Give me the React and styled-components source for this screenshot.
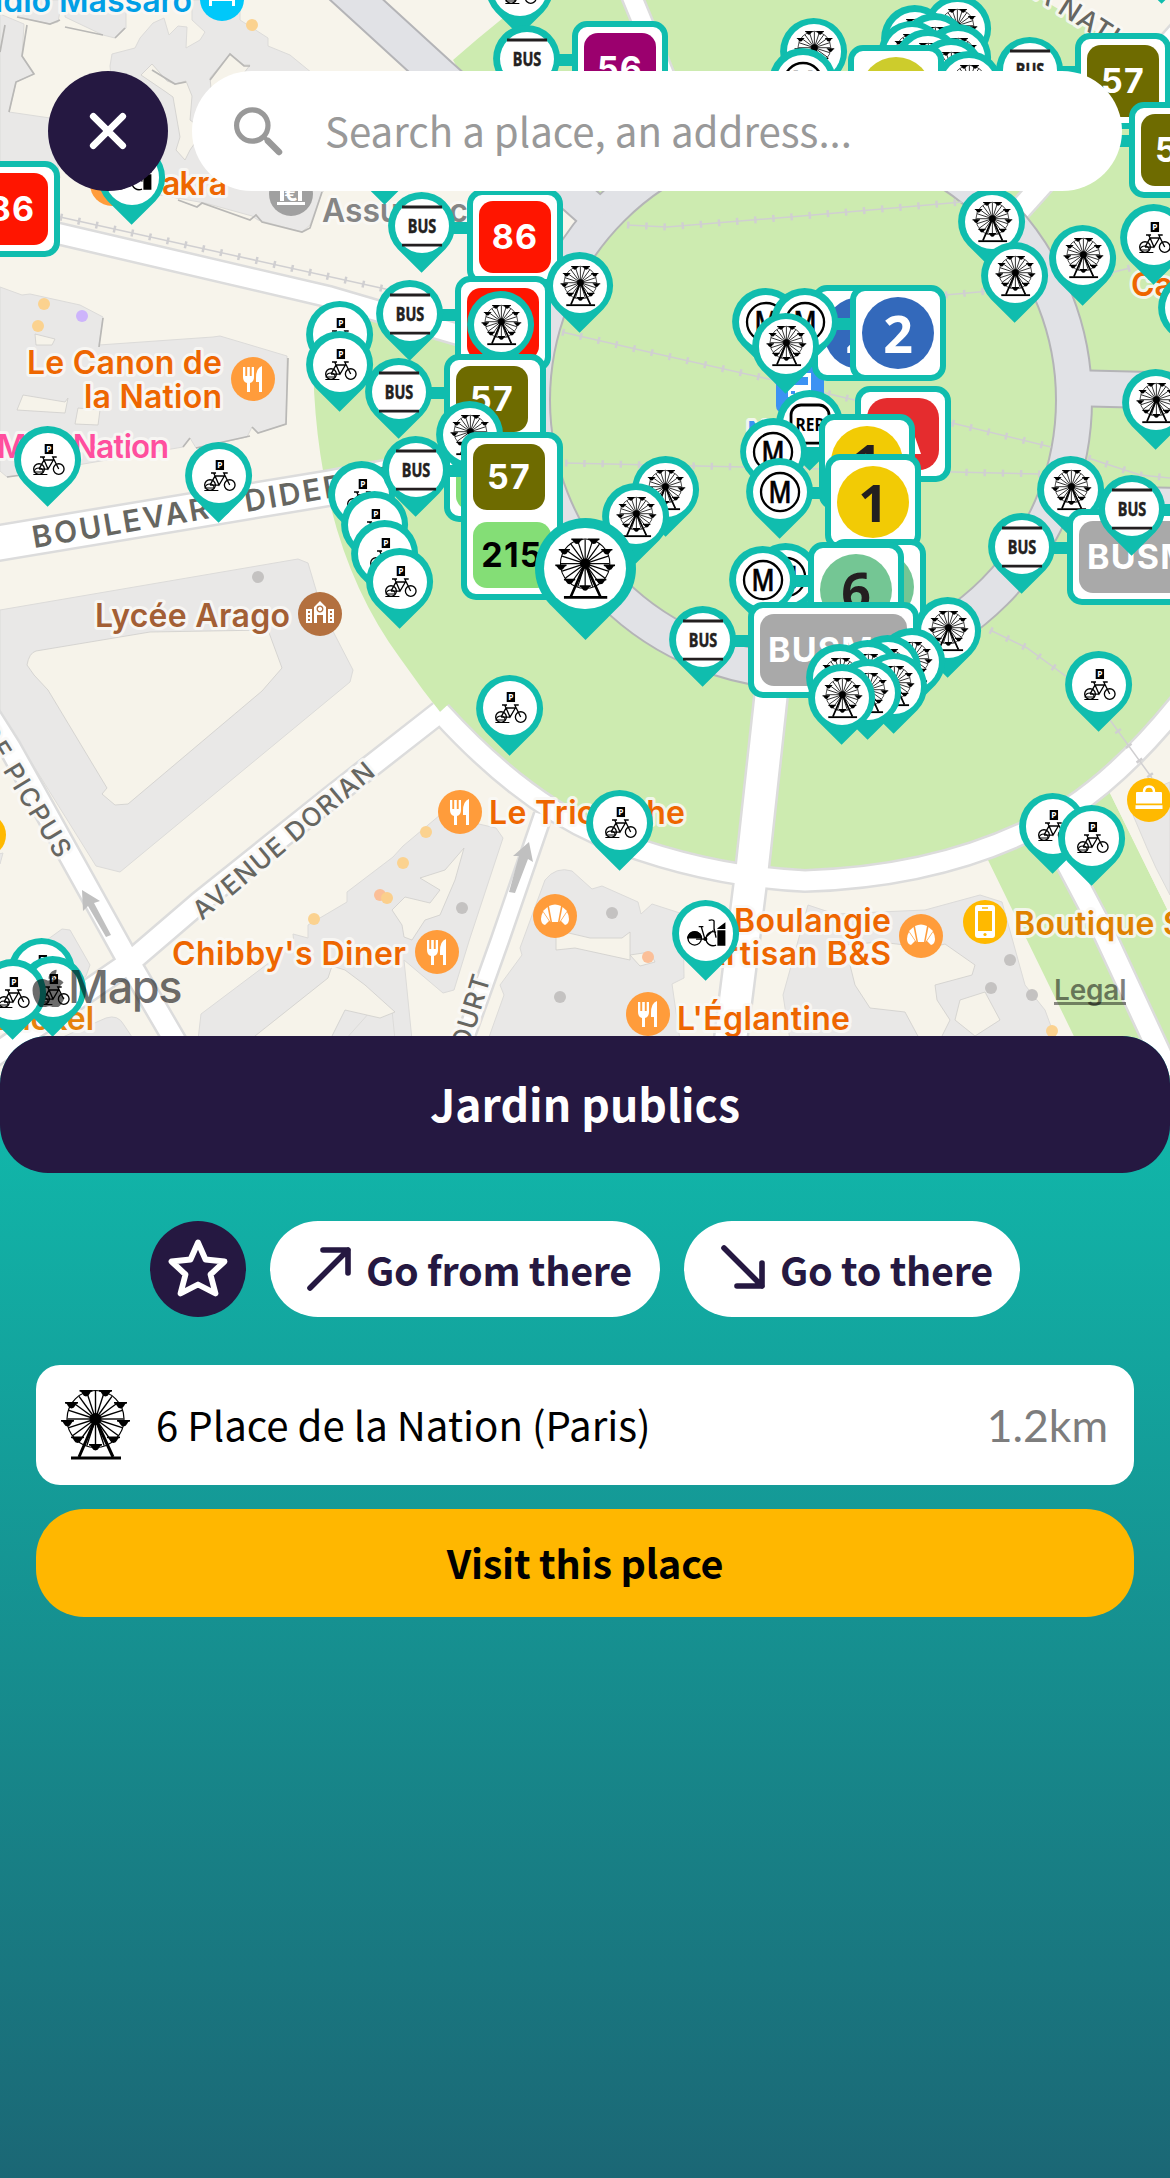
import React from "react";
import styled, { createGlobalStyle, css } from "styled-components";

const TEAL = "#10bdae";
const NIGHT = "#251841";
const ORANGE = "#ee6600";
const UI_FONT = `"Noto Sans CJK SC", "Noto Sans", sans-serif`;
const MAP_FONT = `Inter, "Liberation Sans", sans-serif`;

const GlobalStyle = createGlobalStyle`
  * { box-sizing: border-box; }
  html, body { margin: 0; padding: 0; }
  body { width: 1170px; height: 2178px; overflow: hidden; background: #f7f4eb; font-family: ${UI_FONT}; }
  button, input { font-family: inherit; border: 0; padding: 0; margin: 0; }
`;

/* ---------- layout ---------- */

const Screen = styled.div`
  width: 1170px;
  height: 2178px;
  display: flex;
  flex-direction: column;
  overflow: hidden;
`;

const MapArea = styled.section`
  position: relative;
  flex: 0 0 1100px;
  margin-bottom: -64px;
  overflow: hidden;
  padding: 71px 48px 0;
  background: #f7f4eb;
`;

const MapDrawing = styled.svg`
  position: absolute;
  inset: 0;
  width: 1170px;
  height: 1100px;
  display: block;
`;

const SearchRow = styled.div`
  position: relative;
  display: flex;
  gap: 24px;
`;

const CloseButton = styled.button`
  width: 120px;
  height: 120px;
  border-radius: 50%;
  background: ${NIGHT};
  display: flex;
  align-items: center;
  justify-content: center;
`;

const SearchBar = styled.div`
  width: 930px;
  height: 120px;
  border-radius: 60px;
  background: #fff;
  display: flex;
  align-items: center;
  padding-left: 41px;
  gap: 42px;
`;

const SearchPlaceholder = styled.span`
  color: #999;
  font-size: 40.2px;
  font-weight: 400;
  line-height: 60px;
  white-space: nowrap;
  padding-bottom: 2px;
`;

/* ---------- pins ---------- */

const PinRoot = styled.div`
  position: absolute;
  left: ${(p) => p.$x - p.$r}px;
  top: ${(p) => p.$y - p.$r}px;
  width: ${(p) => p.$r * 2}px;
  height: ${(p) => p.$r * 2}px;
  display: flex;
  align-items: center;
  justify-content: center;
  &::before {
    content: "";
    position: absolute;
    inset: 0;
    background: ${TEAL};
    border-radius: 50% 50% 0 50%;
    transform: rotate(45deg);
  }
`;

const PinFace = styled.div`
  position: relative;
  width: 80.5%;
  height: 80.5%;
  border-radius: 50%;
  background: #fff;
  svg { display: block; width: 100%; height: 100%; }
`;

const LineBox = styled.div`
  position: absolute;
  left: ${(p) => p.$x}px;
  top: ${(p) => p.$y}px;
  border: 6px solid ${TEAL};
  border-radius: 15px;
  background: #fff;
  padding: 6px;
  display: flex;
  flex-direction: column;
  gap: 12px;
  width: ${(p) => p.$w || 96}px;
  ${(p) => p.$link && css`
    &::before {
      content: "";
      position: absolute;
      right: 100%;
      top: ${p.$linkTop}px;
      width: ${p.$link}px;
      height: 12px;
      background: ${TEAL};
    }
  `}
`;

const LineTag = styled.span`
  display: flex;
  align-items: center;
  justify-content: ${(p) => (p.$start ? "flex-start" : "center")};
  padding-left: ${(p) => (p.$start ? 8 : 0)}px;
  width: ${(p) => p.$w || 72}px;
  height: ${(p) => p.$h || 72}px;
  border-radius: 14px;
  background: ${(p) => p.$bg};
  color: ${(p) => p.$fg || "#fff"};
  font-family: ${MAP_FONT};
  font-weight: 650;
  font-size: 34px;
  letter-spacing: 1.2px;
  line-height: 1;
`;

const LineDisc = styled(LineTag)`
  border-radius: ${(p) => (p.$square ? "20px" : "50%")};
  font-family: "Noto Sans", "Open Sans", sans-serif;
  font-weight: 700;
  font-size: 52px;
  letter-spacing: 0;
`;

/* ---------- map marks ---------- */

const MapsMark = styled.div`
  position: absolute;
  left: 32px;
  top: 957px;
  display: flex;
  align-items: center;
  gap: 3px;
  color: rgba(0, 0, 0, 0.58);
  font: 500 45px/60px ${MAP_FONT};
  letter-spacing: -1.4px;
`;

const LegalLink = styled.span`
  position: absolute;
  left: 1054px;
  top: 972px;
  font: 600 28px/36px ${MAP_FONT};
  letter-spacing: -0.2px;
  color: rgba(0, 0, 0, 0.5);
  border-bottom: 3px solid rgba(0, 0, 0, 0.45);
  height: 33px;
`;

/* ---------- sheet ---------- */

const Sheet = styled.main`
  position: relative;
  flex: 1;
  border-radius: 48px 48px 0 0;
  background: linear-gradient(180deg, #10bdae 0%, #1b6775 100%);
  display: flex;
  flex-direction: column;
`;

const SheetTitle = styled.h1`
  margin: 0;
  height: 137px;
  border-radius: 48px;
  background: ${NIGHT};
  color: #fff;
  display: flex;
  align-items: center;
  justify-content: center;
  padding-bottom: 4px;
  font-size: 44.5px;
  font-weight: 700;
  line-height: 64px;
`;

const SheetBody = styled.div`
  display: flex;
  flex-direction: column;
  padding: 48px 36px 0;
`;

const Actions = styled.div`
  display: flex;
  justify-content: center;
  gap: 24px;
  margin-bottom: 48px;
`;

const StarButton = styled.button`
  width: 96px;
  height: 96px;
  border-radius: 50%;
  background: ${NIGHT};
  display: flex;
  align-items: center;
  justify-content: center;
`;

const ActionButton = styled.button`
  width: ${(p) => p.$w}px;
  height: 96px;
  border-radius: 48px;
  background: #fff;
  color: ${NIGHT};
  display: flex;
  align-items: center;
  padding-left: 34px;
  gap: 12px;
  font-size: 39.5px;
  font-weight: 700;
  letter-spacing: -0.3px;
  line-height: 60px;
  white-space: nowrap;
`;

const AddressCard = styled.div`
  height: 120px;
  border-radius: 24px;
  background: #fff;
  display: flex;
  align-items: center;
  padding: 0 26px 0 24px;
  margin-bottom: 24px;
`;

const Address = styled.span`
  margin-left: 24px;
  flex: 1;
  padding-bottom: 2px;
  font-size: 40.2px;
  line-height: 60px;
  color: #000;
`;

const Distance = styled.span`
  font-family: Lato, sans-serif;
  font-size: 44.5px;
  line-height: 60px;
  color: #7d7d7d;
`;

const VisitButton = styled.button`
  height: 108px;
  border-radius: 48px;
  background: #ffb700;
  color: #000;
  padding-bottom: 2px;
  font-size: 39.5px;
  font-weight: 700;
  letter-spacing: -0.2px;
  line-height: 60px;
`;

/* ---------- icons ---------- */

const GONDOLAS = [[25, 1], [44.5, 1], [10.5, 13], [59.5, 13], [6.5, 31], [62.5, 31], [16.5, 47.5], [52.5, 47.5], [34.5, 55]];
const SPOKES = Array.from({ length: 20 }, (_, i) => (i * Math.PI) / 10);

const WheelShape = () => (
  <g stroke="#000" fill="none">
    <circle cx="34.5" cy="29" r="28.5" strokeWidth="1.2" />
    {SPOKES.map((a) => (
      <line key={a} x1="34.5" y1="29" x2={34.5 + 28 * Math.cos(a)} y2={29 + 28 * Math.sin(a)} strokeWidth="1.4" />
    ))}
    <circle cx="34.5" cy="29" r="5.5" fill="#000" />
    {GONDOLAS.map(([x, y]) => (
      <path key={x + "-" + y} d={`M${x - 6.5} ${y - 1}h13v1.6q-2 0-3 2.4q-1 2.4-3.500 2.400q-2.500 0-3.500-2.400q-1-2.400-3-2.400z`} fill="#000" stroke="none" />
    ))}
    <path d="M34.500 29L18 67M34.500 29L52 67" strokeWidth="3" />
    <path d="M10 68H60" strokeWidth="3.200" />
  </g>
);

const WheelFace = () => (
  <svg viewBox="-27 -27 54 54">
    <g transform="translate(-19.500,-20) scale(0.575)"><WheelShape /></g>
  </svg>
);

const BikeFace = () => (
  <svg viewBox="-81 -81 162 162">
    <rect x="-10" y="-48" width="25" height="30" />
    <text x="2.500" y="-24" textAnchor="middle" fill="#fff" fontFamily="Noto Sans" fontWeight="700" fontSize="25">P</text>
    <g fill="none" stroke="#000" strokeWidth="4">
      <circle cx="-27" cy="27" r="16" />
      <circle cx="32" cy="27" r="16" />
      <path d="M-27 27L-12 0L16 0L0 27L-12 0L-16 -9M-24 -9H-9M0 27H-27M32 27L14 -9H26" />
      <path d="M-44 43H-2M-42 36q2-12 15-12q12 0 12 12z" strokeWidth="3" />
    </g>
  </svg>
);

const VelibFace = () => (
  <svg viewBox="-81 -81 162 162">
    <circle cx="-34" cy="16" r="20" fill="none" stroke="#000" strokeWidth="4" />
    <path d="M-57 14Q-52-5-34-5Q-14-4-11 16H-57z" />
    <path d="M30 -2A21 21 0 1 0 30 36M-22 -19H-8M-14 -18L-4 16L22 -8M24 -10V-36Q22-42 8-38M-2 18L-30 18M24 -14L30 14" fill="none" stroke="#000" strokeWidth="4" />
    <circle cx="-2" cy="18" r="6" />
    <path d="M34 -14L58 -32V-12H34zM34 -8H58V38H34z" />
  </svg>
);

const BusFace = () => (
  <svg viewBox="-27 -27 54 54">
    <path d="M-20 -19H20M-20 19H20" stroke="#231f20" strokeWidth="2.800" />
    <text x="-14.200" y="6.800" textLength="28.400" lengthAdjust="spacingAndGlyphs" fontFamily="Noto Sans" fontWeight="700" fontSize="19" fill="#231f20" stroke="#231f20" strokeWidth="0.500">BUS</text>
  </svg>
);

const MetroFace = () => (
  <svg viewBox="-27 -27 54 54">
    <circle r="19" fill="none" stroke="#000" strokeWidth="2.300" />
    <text x="-11.500" y="11" textLength="23" lengthAdjust="spacingAndGlyphs" fontFamily="Noto Sans" fontWeight="500" fontSize="31" stroke="#000" strokeWidth="0.700">M</text>
  </svg>
);

const RerFace = () => (
  <svg viewBox="-27 -27 54 54">
    <rect x="-19" y="-19" width="38" height="38" rx="10" fill="none" stroke="#000" strokeWidth="2.800" />
    <text x="-14.500" y="6.600" textLength="29" lengthAdjust="spacingAndGlyphs" fontFamily="Noto Sans" fontWeight="700" fontSize="18.500">RER</text>
  </svg>
);

const FACES = { w: WheelFace, p: BikeFace, v: VelibFace, b: BusFace, m: MetroFace, r: RerFace };

const Pin = ({ kind, x, y, r = 33.6 }) => {
  const Face = FACES[kind];
  return (
    <PinRoot $x={x} $y={y} $r={r}>
      <PinFace><Face /></PinFace>
    </PinRoot>
  );
};

const Lines = ({ x, y, w, link, linkY, children }) => (
  <LineBox $x={x} $y={y} $w={w} $link={link} $linkTop={linkY - y - 12}>{children}</LineBox>
);

const OLIVE = "#6e6b00";
const LIME = "#84de76";
const GREY = "#a9a9a9";

const Markers = () => (
  <>
    <Pin kind="p" x={520} y={-11} />
    <Pin kind="p" x={1162} y={-43} />
    <Pin kind="w" x={957.500} y={29} />
    <Pin kind="w" x={915} y={39} />
    <Pin kind="w" x={935} y={47} />
    <Pin kind="w" x={814} y={51.500} />
    <Pin kind="w" x={958} y={58} />
    <Pin kind="w" x={912} y={54.500} />
    <Pin kind="w" x={928} y={63} />
    <Pin kind="w" x={951} y={72} />
    <Lines x={572} y={21} link={20} linkY={60}><LineTag $bg="#9b006e">56</LineTag></Lines>
    <Pin kind="b" x={526.700} y={58.700} />
    <Lines x={848} y={45}><LineDisc $bg="#cdcc2c" $fg="#231f20">9</LineDisc></Lines>
    <Pin kind="m" x={802.700} y={82} />
    <Pin kind="w" x={969} y={85} />
    <Lines x={1075} y={33} link={30} linkY={72}><LineTag $bg={OLIVE}>57</LineTag></Lines>
    <Pin kind="b" x={1030} y={70.500} />
    <Lines x={1129} y={102} link={60} linkY={141}><LineTag $bg={OLIVE}>57</LineTag></Lines>
    <Pin kind="b" x={385} y={158} />
    <Pin kind="v" x={132} y={177.500} />
    <Lines x={-36} y={161}><LineTag $bg="#ff1500">86</LineTag></Lines>
    <Lines x={467} y={189} link={20} linkY={228}><LineTag $bg="#ff1500">86</LineTag></Lines>
    <Pin kind="b" x={422} y={226} />
    <Pin kind="w" x={992} y={222} />
    <Pin kind="p" x={1154} y={237.700} />
    <Pin kind="w" x={1083} y={258.300} />
    <Pin kind="w" x={1015} y={276} />
    <Pin kind="w" x={1191.700} y={308} />
    <Lines x={455} y={276} link={20} linkY={315}><LineTag $bg="#ff1500">86</LineTag></Lines>
    <Pin kind="w" x={580} y={285.700} />
    <Pin kind="b" x={410} y={313.700} />
    <Pin kind="w" x={501} y={325} />
    <Pin kind="p" x={340} y={334.500} />
    <Pin kind="p" x={340} y={365} />
    <Lines x={812} y={285}><LineDisc $bg="#3369bb">2</LineDisc></Lines>
    <Pin kind="m" x={766} y={322} />
    <Lines x={850} y={285} link={30} linkY={324}><LineDisc $bg="#3369bb">2</LineDisc></Lines>
    <Pin kind="m" x={804.700} y={322} />
    <Pin kind="w" x={786} y={346.500} />
    <Lines x={444} y={354} w={102} link={20} linkY={393}>
      <LineTag $bg={OLIVE} $h={66}>57</LineTag>
      <LineTag $bg={LIME} $fg="#000" $h={66} $w={78}>215</LineTag>
    </Lines>
    <Pin kind="b" x={398.700} y={391.700} />
    <Pin kind="w" x={1156} y={402.700} />
    <Lines x={855} y={386}><LineDisc $bg="#e52c2e" $square>A</LineDisc></Lines>
    <Pin kind="r" x={810} y={423.700} />
    <Pin kind="w" x={470} y={434.700} />
    <Lines x={819} y={414} link={20} linkY={453}><LineDisc $bg="#f2cb05" $fg="#231f20">1</LineDisc></Lines>
    <Pin kind="m" x={773.500} y={451.700} />
    <Lines x={461} y={432} w={102} link={20} linkY={471}>
      <LineTag $bg={OLIVE} $h={66}>57</LineTag>
      <LineTag $bg={LIME} $fg="#000" $h={66} $w={78}>215</LineTag>
    </Lines>
    <Pin kind="p" x={48} y={459.700} />
    <Pin kind="p" x={219} y={475.700} />
    <Pin kind="p" x={361.700} y={494.700} />
    <Pin kind="b" x={416} y={469.700} />
    <Pin kind="w" x={1071} y={489.700} />
    <Lines x={825} y={454} link={20} linkY={493}><LineDisc $bg="#f2cb05" $fg="#231f20">1</LineDisc></Lines>
    <Pin kind="m" x={780} y={491.700} />
    <Pin kind="w" x={665.500} y={489.700} />
    <Pin kind="w" x={636} y={517} />
    <Lines x={1067} y={509} w={171} link={20} linkY={548}><LineTag $bg={GREY} $w={147} $start>BUSM</LineTag></Lines>
    <Lines x={1180} y={470} link={30} linkY={510} />
    <Pin kind="b" x={1132} y={508.700} />
    <Pin kind="p" x={375} y={524.700} />
    <Pin kind="p" x={385} y={553.700} />
    <Pin kind="b" x={1022} y={546.700} />
    <Pin kind="p" x={400} y={581.700} />
    <Pin kind="m" x={786} y={577} />
    <Lines x={830} y={539} link={20} linkY={580}><LineDisc $bg="#74c694" $fg="#231f20">6</LineDisc></Lines>
    <Lines x={808} y={542} link={20} linkY={581}><LineDisc $bg="#74c694" $fg="#231f20">6</LineDisc></Lines>
    <Pin kind="m" x={762.700} y={579.700} />
    <Lines x={748} y={602} w={171} link={20} linkY={641}><LineTag $bg={GREY} $w={147} $start>BUSM</LineTag></Lines>
    <Pin kind="b" x={703} y={639.700} />
    <Pin kind="w" x={948} y={630.700} />
    <Pin kind="w" x={911.700} y={661.700} />
    <Pin kind="w" x={888} y={669} />
    <Pin kind="w" x={868} y={674} />
    <Pin kind="w" x={840} y={677.700} />
    <Pin kind="w" x={894} y={686.500} />
    <Pin kind="w" x={868} y={693} />
    <Pin kind="w" x={842} y={698} />
    <Pin kind="p" x={1099} y={684.700} />
    <Pin kind="p" x={510} y={708.300} />
    <Pin kind="p" x={620} y={823.300} />
    <Pin kind="p" x={1053} y={826.500} />
    <Pin kind="p" x={1092} y={838.500} />
    <Pin kind="v" x={706} y={933.500} />
    <Pin kind="p" x={41.700} y={971.500} />
    <Pin kind="p" x={53} y={989.700} />
    <Pin kind="p" x={13} y={992.700} />
    <Pin kind="w" x={585} y={568.500} r={50.500} />
  </>
);

/* ---------- base map ---------- */

const WHITE_ROADS = [
  ["M-20 546L330 488L470 462", 33],
  ["M-20 216L60 234L330 297L470 338", 19],
  ["M440 712L330 798L200 902L130 962L-20 1065", 20],
  ["M-30 685L10 748L125 955L195 1075", 20],
  ["M440 712Q520 800 600 835Q700 876 805 881Q960 876 1070 808Q1130 768 1190 690", 19],
  ["M775 660L752 870L728 1060", 31],
  ["M543 815L500 940L450 1080", 16],
  ["M1060 850L1105 935L1170 1075", 20],
  ["M625 -20L695 150", 18],
  ["M1015 215L1190 20", 20],
];

const GREY_ROADS = ["M335 -20L440 76L600 218", "M1070 388L1190 391", "M1075 520Q1100 500 1190 507"];

const RAILS = [
  "M60 217L390 290",
  "M627 225L667 227L790 217L962 202",
  "M562 332L640 350L773 380L825 393L952 423L1051 447",
  "M565 463L743 467L1040 474",
  "M1088 458L1140 475L1170 478",
  "M990 630L1027 648L1067 677L1110 720L1152 778",
  "M945 295L990 291M1110 273L1130 268",
];

const BUILDINGS = [
  "M0 14L24 24L22 56L34 74L16 82L9 112L50 118L60 178L0 168z",
  "M18 0H62L58 22L50 24L18 17z",
  "M65 17L66 0H112L126 12V28L115 38L103 35z",
  "M153 23L164 18L169 35L178 26L187 27L186 48L200 40L205 32L192 20L192 0H240V20L268 38V46L290 55L400 145L322 192L310 225L302 232L258 220L252 216L205 203L160 195L120 170L110 66L112 54L135 48L140 38z",
  "M0 287L22 295L30 294L80 305L103 317L99 345L213 337L220 336L287 356L286 424L258 433L252 427L247 437L196 448L190 438L183 447L7 477L0 471z",
  "M0 610L298 559L308 563L322 610L353 670L350 682L120 872L96 866L0 712z",
  "M198 1040L201 1014L294 944L293 934L308 938L308 925L347 902V892L393 857L403 846L440 815L496 828L503 838L470 938L454 990L443 993L404 960L412 1040z",
  "M545 880Q556 866 572 871L592 889L602 886L638 902L641 914L652 904L683 914L684 978L672 984L680 1040H488L504 995L500 985L522 955L520 948z",
  "M808 905L835 914L925 910L980 895L1002 902L1025 985L1045 1010L1056 1040H790L783 995z",
  "M1133 815L1156 788L1170 782V895L1156 868L1147 848z",
  "M40 945L62 929L70 930L90 965L86 976L60 995z",
  "M56 1040L106 1018Q118 1014 124 1025L134 1040z",
  "M345 1040L370 1012L392 1010L395 1040z",
  "M-5 855L3 853L0 864z",
];

const COURTS = [
  "M23 395L65 402L68 398L65 413L17 410z",
  "M78 408L100 410L98 425L75 424z",
  "M27 665Q29 653 36 651L150 632L268 630L282 668L262 691L128 804L115 805L102 794L107 788L48 690L34 675z",
  "M152 64L167 81L175 84L186 81L192 96L190 120L204 130L190 150L185 160L176 150L180 137L173 97L166 92L141 75z",
  "M210 78L230 54L244 65L250 65L235 85L212 98z",
  "M35 334L55 339L52 345L36 345z",
  "M556 930L590 938L622 938L630 932V960L575 948L556 950z",
  "M392 910L405 897L430 903L440 890L420 878L445 870L464 848L455 880L440 915L425 920L412 940L404 937L402 925z",
  "M250 1040L328 978L332 966L345 970L365 985L395 1012L380 1018L345 1010L330 1040z",
  "M845 945L880 942L930 948L945 944L975 965L972 975L935 985L937 1000L950 1020L940 1040H920L905 1012L870 1008L855 985z",
  "M960 1000L985 992L1000 1020L975 1036L955 1020z",
  "M630 955L650 952L655 962L640 966z",
];

const DOTS = [
  [252, 25, "#fbd28f"], [44, 304, "#fbd28f"], [38, 326, "#fbd28f"], [82, 316, "#cdb4fb"],
  [314, 919, "#fbd28f"], [380, 895, "#fbbf98"], [387, 898, "#fbcf8c"], [426, 832, "#fbd28f"], [403, 863, "#fbd28f"],
  [258, 577, "#c4c2c1"], [462, 908, "#c4c2c1"], [612, 913, "#c4c2c1"], [560, 997, "#c4c2c1"], [648, 957, "#fbbf98"],
  [1010, 960, "#c4c2c1"], [991, 988, "#c4c2c1"], [1032, 995, "#c4c2c1"], [1052, 1031, "#fbd28f"],
];

const Label = styled.text`
  font-family: ${MAP_FONT};
  font-weight: ${(p) => p.$weight || 600};
  font-size: ${(p) => p.$size || 32}px;
  letter-spacing: ${(p) => p.$spacing || 0}px;
  fill: ${(p) => p.$color || ORANGE};
  stroke: ${(p) => (p.$bare ? "none" : "rgba(250,249,246,0.85)")};
  stroke-width: 6px;
  stroke-linejoin: round;
  paint-order: stroke;
`;

const Street = ({ x, y, angle, children, ...rest }) => (
  <Label transform={`translate(${x} ${y}) rotate(${angle})`} $color="#666661" $weight={500} {...rest}>{children}</Label>
);

const Poi = ({ x, y, color = "#ff9c3b", children }) => (
  <g transform={`translate(${x} ${y})`}>
    <circle r="22" fill={color} />
    {children}
  </g>
);

const Fork = () => (
  <g fill="#fff">
    <path d="M-10 -12v10q0 5 4 6v9h3v-9q4-1 4-6v-10h-2.300v9h-1.900v-9h-2.600v9h-1.900v-9z" />
    <path d="M9 -13q-6 2-6 12v4h3v10h3z" />
  </g>
);

const Croissant = () => (
  <g fill="#fff">
    <path d="M-6 -10Q0-13 6-10L3 6H-3z" />
    <path d="M-7.500 -9L-4.500 6L-12 -5z" />
    <path d="M7.500 -9L4.500 6L12 -5z" />
    <path d="M-12 -4L-6 5L-10 9Q-14 8-14 3Q-14-1-12-4z" />
    <path d="M12 -4L6 5L10 9Q14 8 14 3Q14-1 12-4z" />
  </g>
);

const BaseMap = () => (
  <MapDrawing viewBox="0 0 1170 1100">
    <rect width="1170" height="1100" fill="#f7f4eb" />
    <path d="M313 350Q313 320 325 290L380 305L455 325L560 245L453 60Q478 38 503 18L530 -5H1035L1110 40L1160 60L1200 20V700Q1130 768 1107 787L1170 915V1100H1105L987 858Q880 890 770 880Q620 860 537 800L440 712L423 690L400 658Q313 540 313 350z" fill="#cdebb0" />
    <path d="M365 300L460 120L565 205L582 220L520 330L455 325z" fill="#f7f4eb" />
    <path d="M1107 787L1180 715V935z" fill="#f7f4eb" />
    {BUILDINGS.map((d) => <path key={d} d={d} fill="#e9e8e7" stroke="#dcdbd9" strokeWidth="1" />)}
    {COURTS.map((d) => <path key={d} d={d} fill="#f6f3ea" stroke="#cfcecb" strokeWidth="0.800" />)}
    <g fill="none" stroke="#b9b8b6" strokeWidth="1.700">
      <path d="M5 25L0 52M27 25L22 56L34 74L16 82L9 112M65 27L103 35M115 38L125 28M17 17L50 24L60 20M210 80L230 54L244 66L250 66M152 70L175 84L186 82M178 200L197 207L202 203L250 220L256 215L262 222L302 232L310 228L322 192M103 318L99 347M252 427L258 433L286 424L288 358M183 447L190 438M196 448L250 436M7 477L60 470" />
    </g>
    {WHITE_ROADS.map(([d, w]) => <path key={d} d={d} fill="none" stroke="#dcdcdc" strokeWidth={w + 5} strokeLinejoin="round" />)}
    {WHITE_ROADS.map(([d, w]) => <path key={d} d={d} fill="none" stroke="#fff" strokeWidth={w} strokeLinejoin="round" />)}
    <circle cx="803" cy="400" r="271" fill="none" stroke="#b4b4b7" strokeWidth="38" />
    {GREY_ROADS.map((d) => <path key={d} d={d} fill="none" stroke="#b4b4b7" strokeWidth="38" />)}
    <circle cx="803" cy="400" r="271" fill="none" stroke="#e1e2e6" strokeWidth="34" />
    {GREY_ROADS.map((d) => <path key={d} d={d} fill="none" stroke="#e1e2e6" strokeWidth="34" />)}
    {RAILS.map((d) => (
      <g key={d} fill="none" stroke="#d0cfd1">
        <path d={d} strokeWidth="1.500" />
        <path d={d} strokeWidth="7" strokeDasharray="2.500 15.700" />
      </g>
    ))}
    {DOTS.map(([x, y, c]) => <circle key={x + "," + y} cx={x} cy={y} r="6" fill={c} />)}
    <path d="M82 890L100 901L94 903L111 935L106 937L88 906L83 911z" fill="#c0c0c0" />
    <path d="M529 842L533 862L528 859L515 893L509 892L519 856L513 856z" fill="#c0c0c0" />

    <Street x={34} y={548} angle={-9.600} $size={30} $spacing={2.500} $weight={600} $bare>BOULEVARD DIDEROT</Street>
    <Street x={202} y={921} angle={-40} $size={26} textLength={228}>AVENUE DORIAN</Street>
    <Street x={58} y={861} angle={58.500} $size={26} $spacing={1.800} textAnchor="end">RUE DE PICPUS</Street>
    <Street x={491} y={977} angle={-73} $size={26} $spacing={1} textAnchor="end">COURT</Street>
    <Street x={1019} y={-12} angle={32.500} $size={27} $spacing={1}>LA NATION</Street>

    <Label x={192} y={11.500} textAnchor="end" $color="#009fe6">Studio Massaro</Label>
    <Label x={162} y={195} textLength={65}>akra</Label>
    <Label x={322} y={222} textLength={146} $color="#858585">Assuranc</Label>
    <Label x={222} y={374} textAnchor="end" textLength={195}>Le Canon de</Label>
    <Label x={222} y={407.500} textAnchor="end" textLength={138}>la Nation</Label>
    <Label x={-3} y={458} textLength={172} $color="#ff4f9e">MK2 Nation</Label>
    <Label x={95} y={626.500} textLength={195} $color="#a35f35">Lycée Arago</Label>
    <Label x={1131} y={296}>Café</Label>
    <Label x={172} y={965} textLength={234}>Chibby's Diner</Label>
    <Label x={489} y={824} textLength={196}>Le Triomphe</Label>
    <Label x={734} y={931.500} textLength={157}>Boulangie</Label>
    <Label x={891} y={965} textAnchor="end" textLength={189}>Artisan B&amp;S</Label>
    <Label x={677} y={1029.500} textLength={173}>L'Églantine</Label>
    <Label x={1014} y={935} $color="#e08200" $spacing={0.300}>Boutique SFR</Label>
    <Label x={94} y={1030} textAnchor="end" $color="#e6820a">Jackel</Label>
    <Label x={747} y={443} $color="#3c92f3" $size={30}>Nation</Label>

    <Poi x={222} y={-1} color="#00c8fa"><path d="M-13 -2H13V7H10V2H-10V7H-13z" fill="#fff" /></Poi>
    <Poi x={112} y={184} />
    <Poi x={291} y={194} color="#a0a0a0">
      <path d="M-14 8H14V11H-14zM-11 -10H-7V7H-11zM7 -10H11V7H7z" fill="#fff" />
      <text y="7" textAnchor="middle" fill="#fff" fontFamily="Inter" fontWeight="700" fontSize="20">€</text>
    </Poi>
    <Poi x={253} y={379}><Fork /></Poi>
    <Poi x={460} y={812}><Fork /></Poi>
    <Poi x={437} y={952}><Fork /></Poi>
    <Poi x={648} y={1014}><Fork /></Poi>
    <Poi x={555} y={916}><Croissant /></Poi>
    <Poi x={921} y={936}><Croissant /></Poi>
    <Poi x={985} y={922} color="#ffb900">
      <path d="M-7 -17H7Q10-17 10-14V13Q10 16 7 16H-7Q-10 16-10 13V-14Q-10-17-7-17zM-7 -11V9H7V-11z" fill="#fff" fillRule="evenodd" />
      <path d="M-3 -14H3" stroke="#ffb900" strokeWidth="1.500" />
      <circle cy="12.500" r="1.600" fill="#ffb900" />
    </Poi>
    <Poi x={1149} y={800} color="#ffb900">
      <path d="M-13 -7Q-13-8-12-8H12Q13-8 13-7V3.500H-13zM-13.500 5.300H13.500V9H-13.500z" fill="#fff" />
      <path d="M-5 -8Q-5-13.500 0-13.500Q5-13.500 5-8" fill="none" stroke="#fff" strokeWidth="2.500" />
    </Poi>
    <Poi x={-16} y={835} color="#ffb900" />
    <Poi x={320} y={614} color="#b3703f">
      <path d="M-14 -5H-8V9H-14zM8 -5H14V9H8zM-6 -7L0-13L6-7V9H3V1H-3V9H-6z" fill="#fff" />
      <path d="M-12 -2H-10M-12 2H-10M-12 6H-10M10 -2H12M10 2H12M10 6H12" stroke="#b3703f" strokeWidth="1.800" />
      <circle cy="-5" r="2.800" fill="#fff" stroke="#b3703f" strokeWidth="1.300" />
    </Poi>
    <rect x="776" y="365" width="48" height="48" rx="7" fill="#3c92f3" />
    <path d="M788 373H811V397H788zM791 377H808V385H791zM791 391V394H795V391zM804 391V394H808V391zM790 399H795L791 405H786zM804 399H809L813 405H808z" fill="#fff" fillRule="evenodd" />
  </MapDrawing>
);

const AppleGlyph = () => (
  <svg width="33" height="40" viewBox="0 0 384 470" fill="currentColor">
    <path d="M318.700 268.700c-.2-36.700 16.400-64.400 50-84.800-18.800-26.900-47.200-41.700-84.700-44.600-35.500-2.800-74.300 20.700-88.500 20.700-15 0-49.400-19.700-76.400-19.700C63.300 141.200 4 184.800 4 273.500q0 39.300 14.400 81.200c12.800 36.700 59 126.700 107.200 125.200 25.200-.6 43-17.900 75.800-17.900 31.800 0 48.300 17.900 76.400 17.900 48.600-.7 90.400-82.500 102.600-119.300-65.200-30.700-61.700-90-61.700-91.900zm-56.600-164.200c27.300-32.400 24.800-61.900 24-72.500-24.100 1.400-52 16.400-67.900 34.900-17.500 19.800-27.800 44.300-25.600 71.900 26.100 2 49.900-11.400 69.500-34.300z" />
  </svg>
);

export default function App() {
  return (
    <>
      <GlobalStyle />
      <Screen>
        <MapArea>
          <BaseMap />
          <Markers />
          <MapsMark><AppleGlyph />Maps</MapsMark>
          <LegalLink>Legal</LegalLink>
          <SearchRow>
            <CloseButton aria-label="Close">
              <svg width="40" height="40" viewBox="-20 -20 40 40">
                <path d="M-14.700 -14.700L14.700 14.700M14.700 -14.700L-14.700 14.700" stroke="#fff" strokeWidth="6.800" strokeLinecap="round" />
              </svg>
            </CloseButton>
            <SearchBar>
              <svg width="50" height="50" viewBox="0 0 50 50" fill="none" stroke="#999">
                <circle cx="19.300" cy="19.500" r="15.700" strokeWidth="5.200" />
                <path d="M35 35L46 46" strokeWidth="6.500" strokeLinecap="round" />
                <path d="M30 30L36 36" strokeWidth="4" />
              </svg>
              <SearchPlaceholder>Search a place, an address...</SearchPlaceholder>
            </SearchBar>
          </SearchRow>
        </MapArea>
        <Sheet>
          <SheetTitle>Jardin publics</SheetTitle>
          <SheetBody>
            <Actions>
              <StarButton aria-label="Favorite">
                <svg width="64" height="64" viewBox="-32 -32 64 64">
                  <path d="M0 -26.500L7.500 -9.500L26.500 -7.500L12.500 5.500L17.500 24.500L0 15.500L-17.500 24.500L-12.500 5.500L-26.500 -7.500L-7.500 -9.500z" fill="none" stroke="#fff" strokeWidth="5.800" strokeLinejoin="round" />
                </svg>
              </StarButton>
              <ActionButton $w={390}>
                <svg width="50" height="50" viewBox="0 0 50 50" fill="none" stroke={NIGHT} strokeWidth="5.600" strokeLinecap="round" strokeLinejoin="round">
                  <path d="M6 44L44 6M19 6H44V29" />
                </svg>
                Go from there
              </ActionButton>
              <ActionButton $w={336}>
                <svg width="50" height="50" viewBox="0 0 50 50" fill="none" stroke={NIGHT} strokeWidth="5.600" strokeLinecap="round" strokeLinejoin="round">
                  <path d="M6 4L44 42M19 42H44V19" />
                </svg>
                Go to there
              </ActionButton>
            </Actions>
            <AddressCard>
              <svg width="72" height="72" viewBox="-1 -1 72 72"><WheelShape /></svg>
              <Address>6 Place de la Nation (Paris)</Address>
              <Distance>1.2km</Distance>
            </AddressCard>
            <VisitButton>Visit this place</VisitButton>
          </SheetBody>
        </Sheet>
      </Screen>
    </>
  );
}
